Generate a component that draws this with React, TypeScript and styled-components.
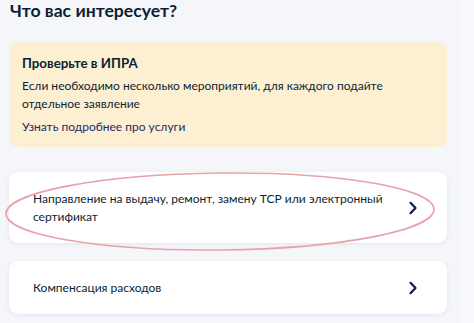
import React from "react";
import styled, { createGlobalStyle } from "styled-components";

const Global = createGlobalStyle`
  html, body { margin: 0; padding: 0; }
  body {
    background: #f4f6fa;
    font-family: Lato, "Noto Sans", sans-serif;
    color: #0b1f33;
    -webkit-font-smoothing: antialiased;
  }
`;

const Page = styled.div`
  position: relative;
  width: 474px;
  height: 323px;
  overflow: hidden;
  box-sizing: border-box;
  padding: 0 27px 0 9px;
  display: flex;
  flex-direction: column;
  background: linear-gradient(to right, #f4f6fa 0, #f4f6fa 461px, #f8f9fc 461px);
`;

const Title = styled.h1`
  margin: -1px 0 0 1px;
  font-size: 17.6px;
  line-height: 24px;
  font-weight: 700;
  color: #0b1f33;
`;

const Notice = styled.div`
  margin-top: 19px;
  background: #fdf0d2;
  border-radius: 9px;
  padding: 12px 13px 11px;
  display: flex;
  flex-direction: column;
`;

const NoticeTitle = styled.div`
  font-size: 13.3px;
  font-weight: 700;
  line-height: 18px;
`;

const NoticeText = styled.div`
  margin-top: 5px;
  font-size: 12px;
  line-height: 18px;
`;

const NoticeLink = styled.a`
  margin-top: 5px;
  font-size: 12px;
  line-height: 18px;
  color: #1b2a6b;
  text-decoration: none;
`;

const Card = styled.div<{ $h: number; $mt: number }>`
  margin-top: ${(p) => p.$mt}px;
  height: ${(p) => p.$h}px;
  background: #ffffff;
  border-radius: 9px;
  box-shadow: 0 1px 4px rgba(60, 80, 130, 0.1);
  display: flex;
  align-items: center;
  padding: 0 29px 0 24px;
  box-sizing: border-box;
  gap: 10px;
`;

const CardText = styled.div`
  flex: 1;
  font-size: 12px;
  line-height: 18px;
  color: #0b1f33;
`;

const Chevron = styled.svg`
  flex: none;
  width: 10px;
  height: 14px;
`;

const Annotation = styled.svg`
  position: absolute;
  left: 0;
  top: 0;
  pointer-events: none;
`;

const Arrow = () => (
  <Chevron viewBox="0 0 10 14">
    <path d="M2.5 1.8 L7.5 7 L2.5 12.2" fill="none" stroke="#0e1a4f" strokeWidth="2.2" strokeLinecap="round" strokeLinejoin="round" />
  </Chevron>
);

export default function App() {
  return (
    <>
      <Global />
      <Page>
        <Title>Что вас интересует?</Title>
        <Notice>
          <NoticeTitle>Проверьте в ИПРА</NoticeTitle>
          <NoticeText>
            Если необходимо несколько мероприятий, для каждого подайте отдельное заявление
          </NoticeText>
          <NoticeLink>Узнать подробнее про услуги</NoticeLink>
        </Notice>
        <Card $h={71} $mt={25}>
          <CardText>Направление на выдачу, ремонт, замену ТСР или электронный сертификат</CardText>
          <Arrow />
        </Card>
        <Card $h={53} $mt={18}>
          <CardText>Компенсация расходов</CardText>
          <Arrow />
        </Card>
        <Annotation width="474" height="323" viewBox="0 0 474 323">
          <ellipse cx="220" cy="211.5" rx="214" ry="38.5" fill="none" stroke="#e8a2aa" strokeWidth="1.6" transform="rotate(-0.6 220 211.5)" />
        </Annotation>
      </Page>
    </>
  );
}
